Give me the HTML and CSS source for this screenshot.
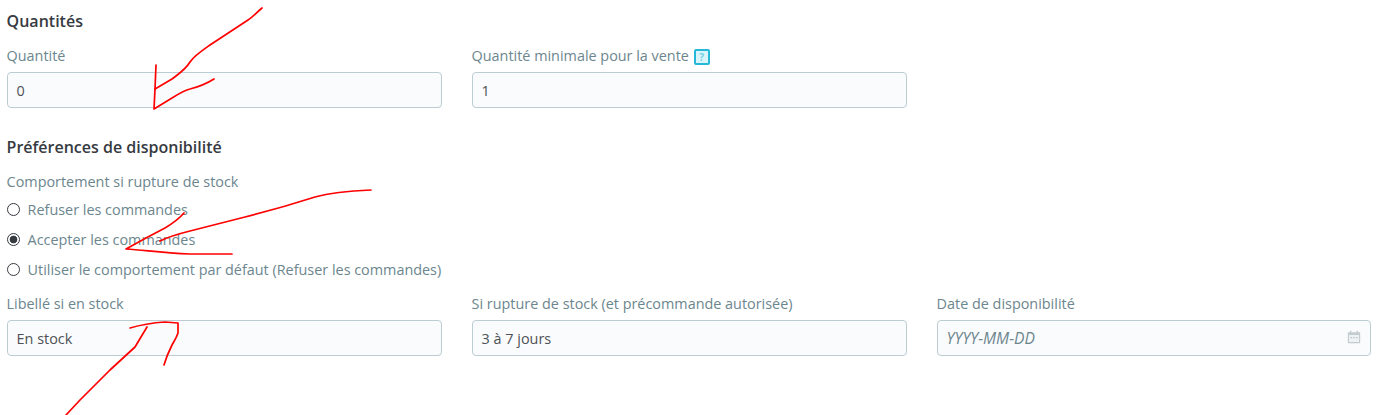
FILE: index.html
```html
<!DOCTYPE html>
<html lang="fr">
<head>
<meta charset="utf-8">
<title>Quantités</title>
<link rel="stylesheet" href="styles.css">
</head>
<body>
<main class="page">
  <section class="quantities">
    <h2 class="title">Quantités</h2>
    <div class="row">
      <div class="field">
        <label class="label">Quantité</label>
        <div class="input">0</div>
      </div>
      <div class="field">
        <label class="label">Quantité minimale pour la vente <span class="help">?</span></label>
        <div class="input">1</div>
      </div>
    </div>
  </section>
  <section class="prefs">
    <h2 class="title">Préférences de disponibilité</h2>
    <div class="label">Comportement si rupture de stock</div>
    <ul class="radios">
      <li class="radio"><span class="dot"></span>Refuser les commandes</li>
      <li class="radio"><span class="dot on"></span>Accepter les commandes</li>
      <li class="radio"><span class="dot"></span>Utiliser le comportement par défaut (Refuser les commandes)</li>
    </ul>
    <div class="row lower">
      <div class="field">
        <label class="label">Libellé si en stock</label>
        <div class="input">En stock</div>
      </div>
      <div class="field">
        <label class="label">Si rupture de stock (et précommande autorisée)</label>
        <div class="input">3 à 7 jours</div>
      </div>
      <div class="field">
        <label class="label">Date de disponibilité</label>
        <div class="input date">
          <span class="placeholder">YYYY-MM-DD</span>
          <svg class="cal" viewBox="0 0 14 14" width="14" height="14" aria-hidden="true">
            <path d="M3 .8h1.4v1.4h5.2V.8H11v1.4h1.2c.6 0 1 .4 1 1v9c0 .6-.4 1-1 1H1.800c-.6 0-1-.4-1-1v-9c0-.6.4-1 1-1H3z" fill="#c3ccd1"/>
            <rect x="2" y="5" width="10" height="7" fill="#eef2f4"/>
            <path d="M3.5 7h1.400v1.200H3.500zM6.300 7h1.400v1.200H6.300zM9.100 7h1.400v1.200H9.100z" fill="#b4bfc5"/>
          </svg>
        </div>
      </div>
    </div>
  </section>
</main>
<svg class="marks" width="1384" height="415" viewBox="0 0 1384 415" aria-hidden="true">
  <path d="M262 8 C256 13 253 17 248 20 L210 45 C200 52 194 56 190 62 C186 69 180 73 172 79 L155 89"/>
  <path d="M156 65 L155 89 L154 109 L172 98 C180 93 185 90 190 89 C198 87 206 84 214 79"/>
  <path d="M371 190 C350 191 330 193 315 197 C290 205 265 212 245 217 L190 231 C178 234 168 237 160 241"/>
  <path d="M184 213 C178 220 170 225 165 228 L146 238 L126 249 C145 250 160 253 190 254 L232 254"/>
  <path d="M66 415 L80 400 L110 370 L135 347 L147 327"/>
  <path d="M130 328 C140 325 150 323 165 322 L178 323 L178 333 C176 339 174 341 172 345 C169 351 166 358 164 365"/>
</svg>
</body>
</html>
```
FILE: styles.css
```css
* {
  box-sizing: border-box;
}

html,
body {
  margin: 0;
  height: 415px;
  overflow: hidden;
  background: #fff;
}

body {
  position: relative;
  font-family: "Open Sans", sans-serif;
  font-size: 14.4px;
  line-height: 21px;
  color: #6c868e;
}

.page {
  width: 1372px;
  padding: 11px 0 0 6.6px;
}

.title {
  margin: 0;
  font-size: 16px;
  line-height: 21px;
  font-weight: 600;
  color: #363a41;
}

.row {
  display: grid;
  grid-template-columns: 435px 435px 434px;
  column-gap: 30px;
}

.label {
  display: block;
  height: 21px;
  line-height: 21px;
}

.field .label {
  margin-bottom: 6px;
}

.quantities .title {
  margin-bottom: 13px;
}

.prefs {
  margin-top: 29px;
}

.prefs .title {
  margin-bottom: 13px;
}

.input {
  height: 36px;
  padding: 7px 9px;
  border: 1px solid #bbcdd2;
  border-radius: 4px;
  background: #fafbfc;
  color: #4d5157;
  line-height: 21px;
}

.date {
  display: flex;
  align-items: center;
  justify-content: space-between;
  padding-right: 9px;
}

.placeholder {
  font-size: 15.6px;
  font-style: italic;
  color: #6c868e;
}

.cal {
  display: block;
  margin-top: -3px;
}

.help {
  display: inline-block;
  width: 16px;
  height: 16px;
  margin-left: 1px;
  border: 2px solid #25b9d7;
  border-radius: 2px;
  background: #d9f4fa;
  color: #6fd2e6;
  font-size: 10px;
  font-weight: 700;
  line-height: 12px;
  text-align: center;
  vertical-align: 0;
}

.radios {
  list-style: none;
  margin: 0;
  padding: 2px 0 0;
}

.radio {
  display: flex;
  align-items: center;
  height: 30px;
}

.radios .radio:last-child {
  margin-bottom: 9px;
}

.dot {
  width: 13px;
  height: 13px;
  margin: -1px 8px -1px 0;
  border: 1px solid #363a41;
  border-radius: 50%;
  background: #fff;
}

.dot.on {
  background: radial-gradient(circle, #363a41 0 3.5px, #fff 4.2px);
}

.marks {
  position: absolute;
  left: 0;
  top: 0;
  pointer-events: none;
}

.marks path {
  fill: none;
  stroke: #f00;
  stroke-width: 1.7;
  stroke-linecap: round;
  stroke-linejoin: round;
}
```
